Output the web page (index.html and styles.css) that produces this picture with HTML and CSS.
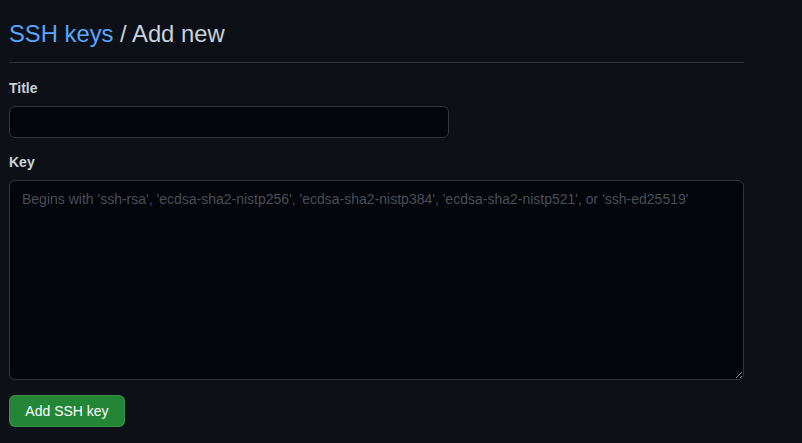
FILE: index.html
```html
<!DOCTYPE html>
<html>
<head>
<meta charset="utf-8">
<link rel="stylesheet" href="styles.css">
</head>
<body>
<div class="page">
  <div class="subhead">
    <h2 class="subhead-heading"><a class="crumb" href="#">SSH keys</a> / Add new</h2>
  </div>
  <form class="form">
    <div class="form-group">
      <label class="label" for="title">Title</label>
      <input class="input input-title" id="title" type="text">
    </div>
    <div class="form-group">
      <label class="label" for="key">Key</label>
      <textarea class="input input-key" id="key" placeholder="Begins with 'ssh-rsa', 'ecdsa-sha2-nistp256', 'ecdsa-sha2-nistp384', 'ecdsa-sha2-nistp521', or 'ssh-ed25519'"></textarea>
    </div>
    <button class="btn-primary" type="button">Add SSH key</button>
  </form>
</div>
</body>
</html>
```
FILE: styles.css
```css
html, body {
  margin: 0;
  padding: 0;
  background: #0d1117;
  color: #c9d1d9;
  font-family: "Liberation Sans", Arial, sans-serif;
  font-size: 14px;
}
.page {
  width: 735px;
  padding: 0 0 0 9px;
}
.subhead {
  padding-top: 16px;
  padding-bottom: 10px;
  border-bottom: 1px solid #30363d;
}
.subhead-heading {
  margin: 0;
  font-size: 23.8px;
  font-weight: 400;
  line-height: 36px;
  color: #c9d1d9;
}
.crumb {
  color: #58a6ff;
  text-decoration: none;
}
.form {
  display: flex;
  flex-direction: column;
  padding-top: 15px;
}
.form-group {
  display: flex;
  flex-direction: column;
  margin-bottom: 14px;
}
.label {
  font-weight: 700;
  font-size: 14px;
  line-height: 21px;
  margin-bottom: 7px;
  color: #c9d1d9;
}
.input {
  box-sizing: border-box;
  background: #03060b;
  border: 1px solid #30363d;
  border-radius: 6px;
  color: #c9d1d9;
  font-family: "Liberation Sans", Arial, sans-serif;
  font-size: 14px;
  outline: none;
}
.input-title {
  width: 440px;
  height: 32px;
  padding: 5px 12px;
}
.input-key {
  width: 735px;
  height: 200px;
  padding: 8px 12px;
  line-height: 20px;
  resize: vertical;
}
.input-key::placeholder {
  color: #484f58;
}
.btn-primary {
  align-self: flex-start;
  box-sizing: border-box;
  width: 116px;
  height: 32px;
  padding: 0 12px;
  margin-top: 1px;
  background: #238636;
  border: 1px solid rgba(240, 246, 252, 0.1);
  border-radius: 6px;
  color: #ffffff;
  font-family: "Liberation Sans", Arial, sans-serif;
  font-size: 14px;
  font-weight: 400;
  cursor: pointer;
}
```
